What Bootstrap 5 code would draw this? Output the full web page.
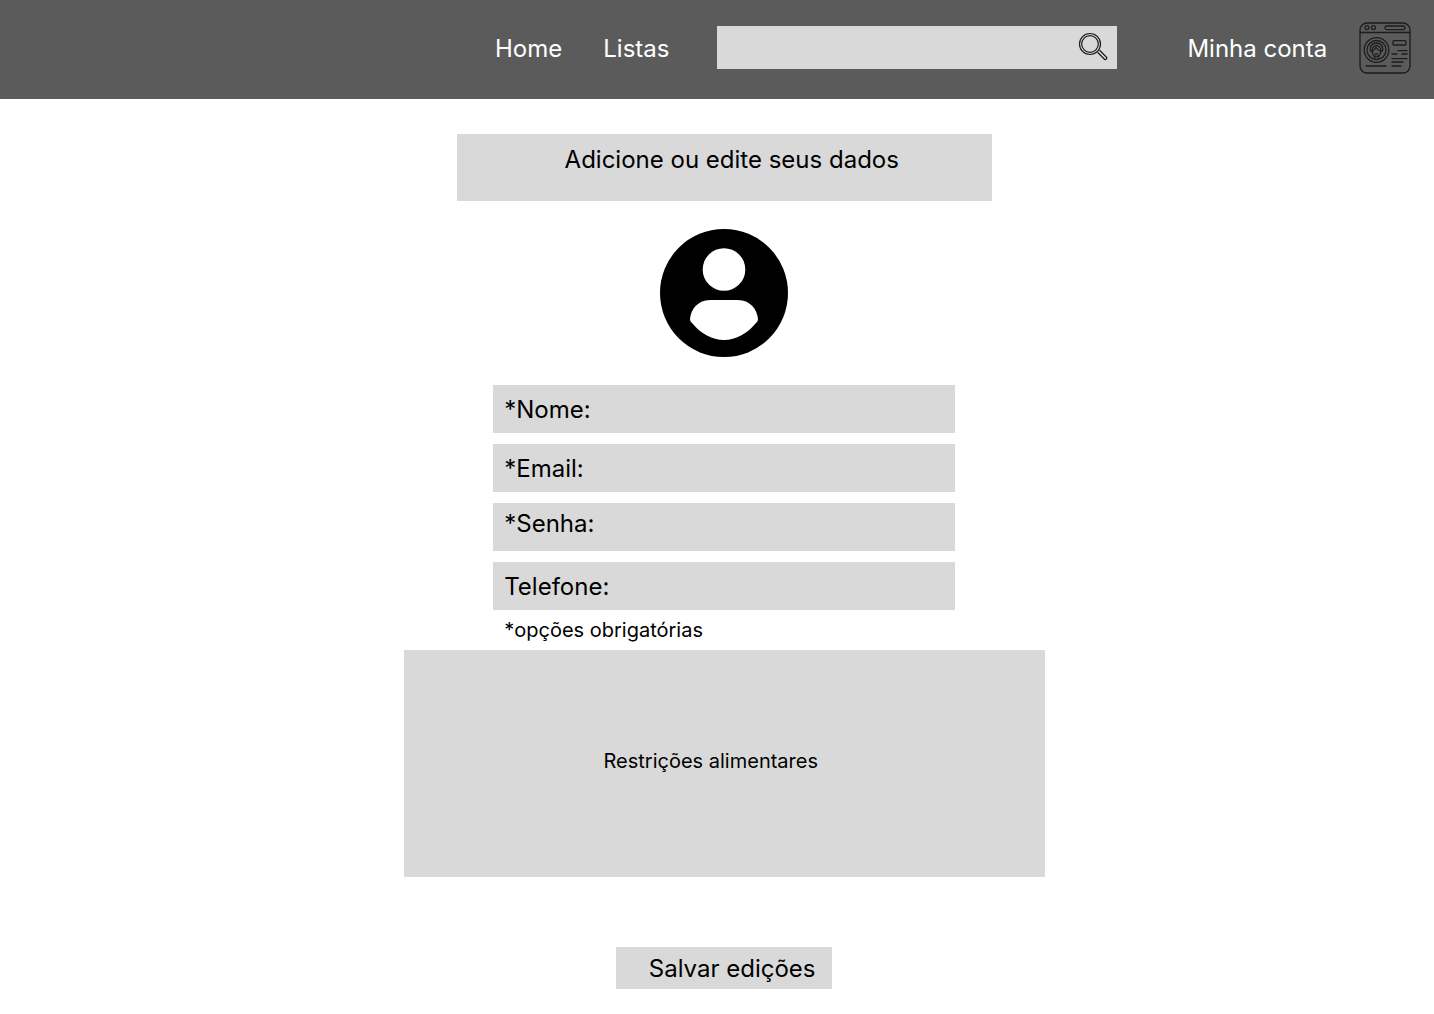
<!DOCTYPE html>
<html lang="pt-BR">
<head>
  <meta charset="UTF-8">
  <title>Minha conta</title>
  <link href="https://cdn.jsdelivr.net/npm/bootstrap@5.3.0/dist/css/bootstrap.min.css" rel="stylesheet">
  <style>
    body { font-family: "Inter", "Liberation Sans", sans-serif; color: #000; }
    .topo { height: 99px; background: #5b5b5b; padding-left: 495px; padding-bottom: 2px; }
    .topo a { color: #fff; font-size: 24px; text-decoration: none; line-height: 1; }
    .link-listas { margin-left: 41px; }
    .busca { width: 400px; height: 43px; margin-left: 48px; margin-top: -3px; background: #d9d9d9; padding-right: 9px; }
    .link-conta { margin-left: 70px; }
    .logo-site { margin-left: 32px; margin-top: -1px; }
    .pagina { width: 641px; margin-left: auto; margin-right: auto; padding-top: 35px; position: relative; left: 7.25px; }
    .caixa { background: #d9d9d9; }
    .titulo { width: 535px; height: 67px; font-size: 24px; line-height: 29px; padding: 11px 0 0 15px; text-align: center; }
    .avatar { margin-top: 28px; margin-bottom: 28px; display: block; }
    .campos { width: 462px; }
    .campo { height: 48px; font-size: 24px; line-height: 29px; padding-left: 11px; margin-bottom: 11px; }
    .campo-nome, .campo-email { padding-top: 10px; }
    .campo-senha { padding-top: 6px; }
    .campo-telefone { padding-top: 10px; margin-bottom: 0; }
    .aviso { font-size: 20px; line-height: 24px; padding: 8px 0 8px 11px; }
    .restricoes { width: 641px; height: 227px; font-size: 20px; line-height: 24px; padding: 99px 27px 0 0; text-align: center; }
    .salvar { width: 216px; height: 42px; margin-top: 70px; font-size: 24px; line-height: 29px; padding: 1px 0 0 32.5px; border: 0; border-radius: 0; color: #000; text-align: left; }
  </style>
</head>
<body class="m-0">
  <nav class="topo d-flex align-items-center">
    <a href="#">Home</a>
    <a href="#" class="link-listas">Listas</a>
    <div class="busca d-flex align-items-center justify-content-end">
      <svg width="30" height="30" viewBox="0 0 30 30" fill="none" stroke="#1c1c1c">
        <circle cx="12" cy="12" r="10.5" stroke-width="1.2"/>
        <circle cx="12" cy="12" r="8.3" stroke-width="1.2"/>
        <path d="M19.6 20.2l7 7.2a1.5 1.5 0 0 0 2-2l-7-7.2" stroke-width="1.3"/>
      </svg>
    </div>
    <a href="#" class="link-conta">Minha conta</a>
    <svg class="logo-site" width="52" height="52" viewBox="0 0 52 52" fill="none" stroke="#1d1d1d" stroke-width="1.3" stroke-linecap="round">
      <rect x="1" y="1" width="50" height="50" rx="7"/>
      <path d="M1 10.500h50"/>
      <circle cx="8" cy="5.600" r="2"/>
      <circle cx="14.500" cy="5.600" r="2"/>
      <rect x="26" y="4" width="20" height="3.600" rx="1.800"/>
      <circle cx="17.500" cy="28" r="12.300"/>
      <circle cx="17.500" cy="28" r="9.500"/>
      <path d="M11.500 29c-1-6 2.500-8 6-8s7 2 6 8"/>
      <ellipse cx="17.500" cy="29" rx="4.500" ry="5.500"/>
      <path d="M13 29.500c2-1 3-3 4-4 1 1.500 4 3.500 5 4M15.500 34v3M19.500 34v3M16 31.800h3"/>
      <rect x="34" y="18.600" width="13" height="4.400" rx="1"/>
      <path d="M39 28.700h9M33 32h5M43 32h5M33 36.700h15M33 40h11M7 44h20M33 44h9"/>
    </svg>
  </nav>

  <main class="pagina d-flex flex-column align-items-center">
    <div class="caixa titulo">Adicione ou edite seus dados</div>
    <svg class="avatar" width="128" height="128" viewBox="0 0 128 128">
      <circle cx="64" cy="64" r="64" fill="#000"/>
      <circle cx="64" cy="40.500" r="21.300" fill="#fff"/>
      <path d="M50 71H78C90 71 97 80 98 90C98 92 97 93 96 94C88 104 76 111 64 111S40 104 32 94C31 93 30 92 30 90C31 80 38 71 50 71Z" fill="#fff"/>
    </svg>
    <div class="campos">
      <div class="caixa campo campo-nome">*Nome:</div>
      <div class="caixa campo campo-email">*Email:</div>
      <div class="caixa campo campo-senha">*Senha:</div>
      <div class="caixa campo campo-telefone">Telefone:</div>
      <div class="aviso">*opções obrigatórias</div>
    </div>
    <div class="caixa restricoes">Restrições alimentares</div>
    <button type="button" class="btn caixa salvar">Salvar edições</button>
  </main>

  <script src="https://cdn.jsdelivr.net/npm/bootstrap@5.3.0/dist/js/bootstrap.bundle.min.js"></script>
</body>
</html>
